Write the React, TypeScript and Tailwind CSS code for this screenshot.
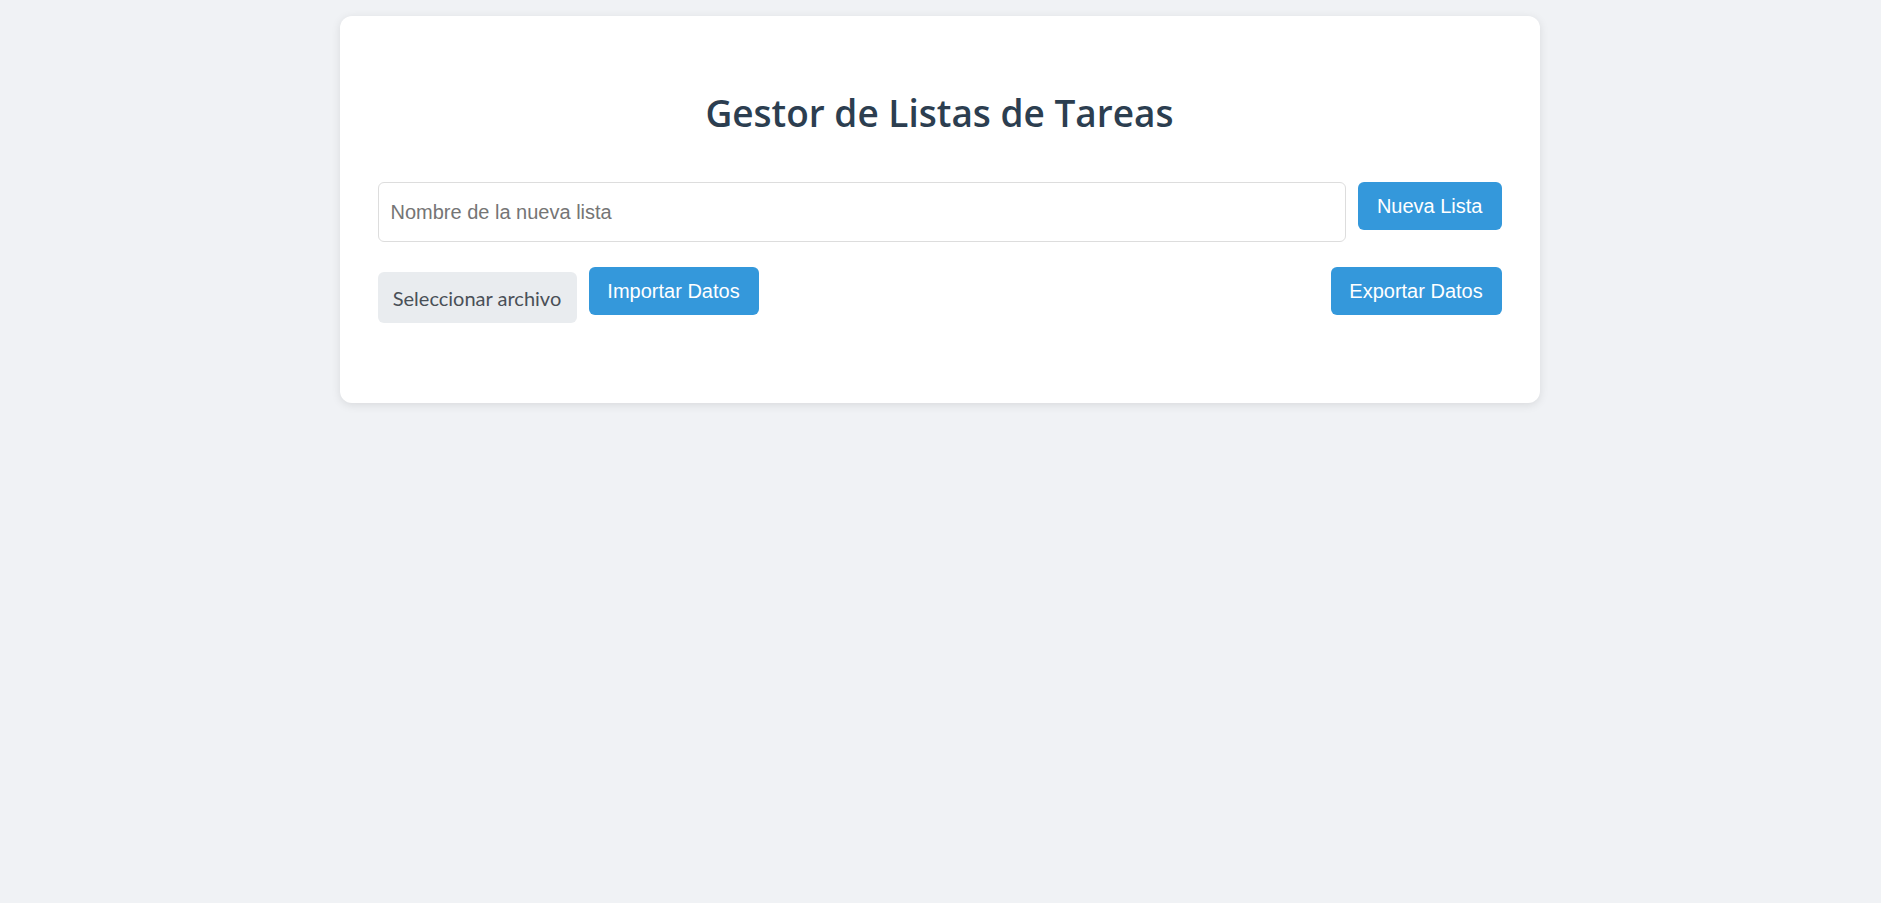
import React from 'react'

const App = () => {
    return (
        <div className="min-h-screen bg-[#f0f2f5] pt-4" style={{ fontFamily: '"Liberation Sans", Arial, sans-serif' }}>
            <div className="w-[1200px] mx-auto -translate-x-px bg-white rounded-xl shadow-[0_2px_10px_rgba(0,0,0,0.1)] px-[38px] pt-[38px] pb-[80px]">
                {/* Title */}
                <h1 className="mt-[34px] text-center text-[37px] leading-[49px] font-semibold text-[#2c3e50] font-['Open_Sans',sans-serif]">
                    Gestor de Listas de Tareas
                </h1>

                {/* New list row */}
                <div className="mt-[45px] flex items-start gap-3">
                    <input
                        type="text"
                        placeholder="Nombre de la nueva lista"
                        className="flex-1 h-[60px] px-3 border border-[#dddddd] rounded-md text-[20px] placeholder:text-[#757575] outline-none"
                    />
                    <button className="h-[48px] px-[19px] bg-[#3498db] text-white text-[20px] rounded-md">
                        Nueva Lista
                    </button>
                </div>

                {/* Import / export row */}
                <div className="mt-[25px] flex items-start justify-between">
                    <div className="flex items-start gap-3">
                        <div className="mt-[5px] h-[51px] w-[199px] flex items-center justify-center bg-[#e9ecef] rounded-md text-[20px] text-[#495057] font-['Lato',sans-serif]">
                            Seleccionar archivo
                        </div>
                        <button className="h-[48px] w-[170px] bg-[#3498db] text-white text-[20px] rounded-md">
                            Importar Datos
                        </button>
                    </div>
                    <button className="h-[48px] w-[171px] bg-[#3498db] text-white text-[20px] rounded-md">
                        Exportar Datos
                    </button>
                </div>
            </div>
        </div>
    )
}

export default App
